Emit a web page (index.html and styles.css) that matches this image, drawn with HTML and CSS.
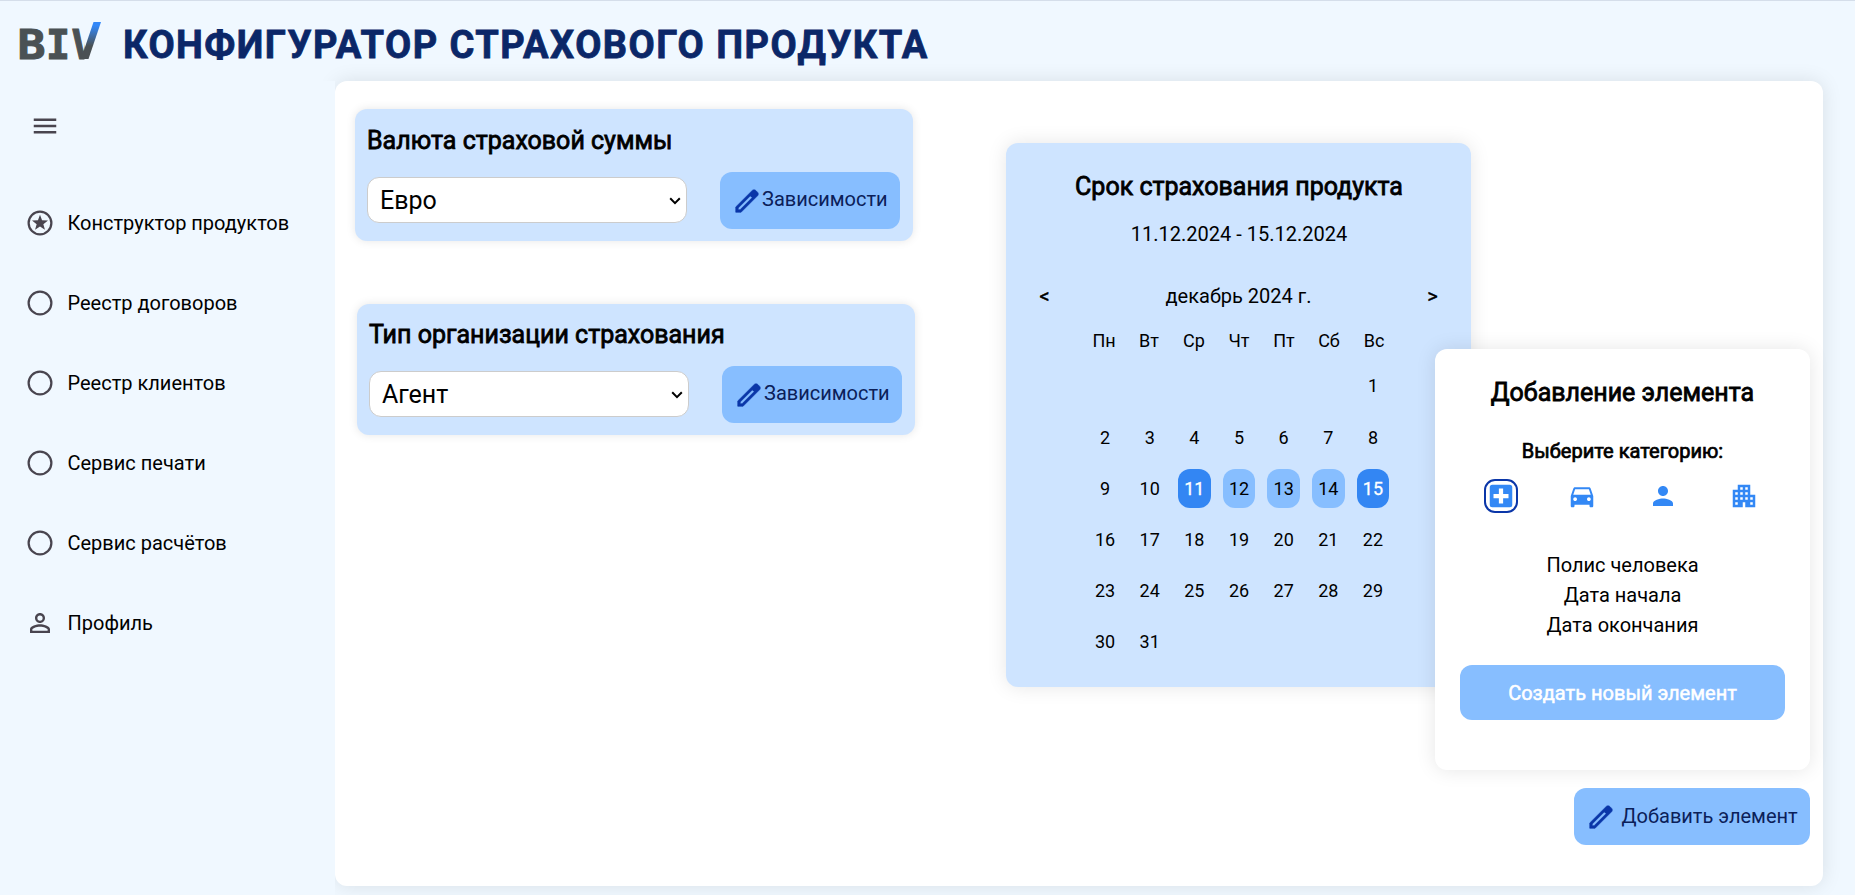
FILE: index.html
```html
<!DOCTYPE html>
<html lang="ru">
<head>
<meta charset="utf-8">
<title>Конфигуратор страхового продукта</title>
<link rel="stylesheet" href="styles.css">
</head>
<body>
<svg class="sprite" aria-hidden="true">
  <symbol id="i-edit" viewBox="0 -960 960 960"><path stroke="currentColor" stroke-width="20" d="M200-200h57l391-391-57-57-391 391v57Zm-80 80v-170l528-527q12-11 26.500-17t30.500-6q16 0 31 6t26 18l55 56q12 11 17.500 26t5.500 30q0 16-5.500 30.500T817-647L290-120H120Zm640-584-56-56 56 56Zm-141 85-28-29 57 57-29-28Z"/><path d="M700-830l130 130-110 110-130-130z"/></symbol>
  <symbol id="i-circle" viewBox="0 0 24 24"><path d="M12 2a10 10 0 1 0 0 20 10 10 0 0 0 0-20zm0 18.200a8.200 8.200 0 1 1 0-16.400 8.200 8.200 0 0 1 0 16.400z"/></symbol>
  <symbol id="i-chevron" viewBox="0 0 12 8"><path d="M1.200 1.300L6 6.100l4.800-4.800" fill="none" stroke="#000" stroke-width="2"/></symbol>
</svg>
<header class="header">
  <svg class="logo" viewBox="0 0 84 40" width="84" height="40">
    <defs>
      <linearGradient id="slash" x1="0" y1="0" x2="0" y2="1"><stop offset="0.1" stop-color="#3388f8"/><stop offset="0.65" stop-color="#4a5154"/></linearGradient>
      <clipPath id="left-arm"><rect x="48" y="0" width="16.500" height="40"/></clipPath>
    </defs>
    <text class="logo-text" x="-2.500" y="38.500" textLength="28" lengthAdjust="spacingAndGlyphs">B</text>
    <text class="logo-text" x="26" y="38.500">I</text>
    <text class="logo-text" x="51.500" y="38.500" clip-path="url(#left-arm)">V</text>
    <polygon points="73.500,2 81,2 68.500,39 61,39" fill="url(#slash)"/>
  </svg>
  <h1 class="title">КОНФИГУРАТОР СТРАХОВОГО ПРОДУКТА</h1>
</header>
<div class="body">
  <aside class="sidebar">
    <svg class="icon burger" viewBox="0 0 24 24"><path d="M3 18h18v-2H3v2zm0-5h18v-2H3v2zm0-7v2h18V6H3z"/></svg>
    <nav class="nav">
      <a class="nav-item"><svg class="icon" viewBox="0 0 24 24"><use href="#i-circle"/><path d="M12 5.300l1.650 4.450 4.750.2-3.720 2.950 1.280 4.570L12 14.860l-3.960 2.610 1.280-4.570L5.600 9.950l4.750-.2z"/></svg><span>Конструктор продуктов</span></a>
      <a class="nav-item"><svg class="icon"><use href="#i-circle"/></svg><span>Реестр договоров</span></a>
      <a class="nav-item"><svg class="icon"><use href="#i-circle"/></svg><span>Реестр клиентов</span></a>
      <a class="nav-item"><svg class="icon"><use href="#i-circle"/></svg><span>Сервис печати</span></a>
      <a class="nav-item"><svg class="icon"><use href="#i-circle"/></svg><span>Сервис расчётов</span></a>
      <a class="nav-item"><svg class="icon" viewBox="0 0 24 24"><path d="M12 5.900a2.100 2.100 0 1 1 0 4.200 2.100 2.100 0 0 1 0-4.200m0 9c2.970 0 6.100 1.460 6.100 2.100v1.100H5.900V17c0-.64 3.130-2.100 6.100-2.100M12 4C9.790 4 8 5.790 8 8s1.790 4 4 4 4-1.790 4-4-1.790-4-4-4zm0 9c-2.670 0-8 1.340-8 4v3h16v-3c0-2.660-5.330-4-8-4z"/></svg><span>Профиль</span></a>
    </nav>
  </aside>
  <main class="canvas">
    <section class="card card-currency">
      <h2 class="heading">Валюта страховой суммы</h2>
      <div class="card-row">
        <div class="select"><span>Евро</span><svg class="chevron"><use href="#i-chevron"/></svg></div>
        <button class="button button-deps"><svg class="icon"><use href="#i-edit"/></svg><span>Зависимости</span></button>
      </div>
    </section>
    <section class="card card-type">
      <h2 class="heading">Тип организации страхования</h2>
      <div class="card-row">
        <div class="select"><span>Агент</span><svg class="chevron"><use href="#i-chevron"/></svg></div>
        <button class="button button-deps"><svg class="icon"><use href="#i-edit"/></svg><span>Зависимости</span></button>
      </div>
    </section>
    <section class="calendar">
      <h2 class="heading">Срок страхования продукта</h2>
      <p class="range">11.12.2024 - 15.12.2024</p>
      <div class="month"><span class="arrow">&lt;</span><span>декабрь 2024 г.</span><span class="arrow">&gt;</span></div>
      <div class="weekdays"><span>Пн</span><span>Вт</span><span>Ср</span><span>Чт</span><span>Пт</span><span>Сб</span><span>Вс</span></div>
      <div class="days">
        <span class="day first">1</span>
        <span class="day">2</span><span class="day">3</span><span class="day">4</span><span class="day">5</span><span class="day">6</span><span class="day">7</span><span class="day">8</span>
        <span class="day">9</span><span class="day">10</span><span class="day edge">11</span><span class="day between">12</span><span class="day between">13</span><span class="day between">14</span><span class="day edge">15</span>
        <span class="day">16</span><span class="day">17</span><span class="day">18</span><span class="day">19</span><span class="day">20</span><span class="day">21</span><span class="day">22</span>
        <span class="day">23</span><span class="day">24</span><span class="day">25</span><span class="day">26</span><span class="day">27</span><span class="day">28</span><span class="day">29</span>
        <span class="day">30</span><span class="day">31</span>
      </div>
    </section>
    <section class="popup">
      <h2 class="heading">Добавление элемента</h2>
      <h3 class="subheading">Выберите категорию:</h3>
      <div class="categories">
        <span class="category active"><svg class="icon" viewBox="0 0 24 24"><path fill-rule="evenodd" d="M5 3h14a2 2 0 0 1 2 2v14a2 2 0 0 1-2 2H5a2 2 0 0 1-2-2V5a2 2 0 0 1 2-2zm5.300 15h3.400v-4.300H18v-3.400h-4.300V6h-3.400v4.300H6v3.400h4.300z"/></svg></span>
        <span class="category"><svg class="icon" viewBox="0 0 24 24"><path d="M18.920 6.010C18.720 5.420 18.160 5 17.500 5h-11c-.66 0-1.210.42-1.420 1.010L3 12v8c0 .55.45 1 1 1h1c.55 0 1-.45 1-1v-1h12v1c0 .55.45 1 1 1h1c.55 0 1-.45 1-1v-8l-2.080-5.990zM6.500 16c-.83 0-1.500-.67-1.500-1.500S5.670 13 6.500 13s1.500.67 1.500 1.500S7.330 16 6.500 16zm11 0c-.83 0-1.500-.67-1.500-1.500s.67-1.500 1.500-1.500 1.500.67 1.500 1.500-.67 1.500-1.500 1.500zM5 11l1.500-4.500h11L19 11H5z"/></svg></span>
        <span class="category"><svg class="icon" viewBox="0 0 24 24"><path d="M12 12c2.210 0 4-1.790 4-4s-1.790-4-4-4-4 1.790-4 4 1.790 4 4 4zm0 2c-2.670 0-8 1.340-8 4v2h16v-2c0-2.660-5.330-4-8-4z"/></svg></span>
        <span class="category"><svg class="icon" viewBox="0 0 24 24"><path d="M17 11V3H7v4H3v14h8v-4h2v4h8V11h-4zM7 19H5v-2h2v2zm0-4H5v-2h2v2zm0-4H5V9h2v2zm4 4H9v-2h2v2zm0-4H9V9h2v2zm0-4H9V5h2v2zm4 8h-2v-2h2v2zm0-4h-2V9h2v2zm0-4h-2V5h2v2zm4 12h-2v-2h2v2zm0-4h-2v-2h2v2z"/></svg></span>
      </div>
      <ul class="elements"><li>Полис человека</li><li>Дата начала</li><li>Дата окончания</li></ul>
      <button class="button button-create"><span>Создать новый элемент</span></button>
    </section>
    <button class="button button-add"><svg class="icon"><use href="#i-edit"/></svg><span>Добавить элемент</span></button>
  </main>
</div>
</body>
</html>
```
FILE: styles.css
```css
* { box-sizing: border-box; }
body {
  margin: 0;
  height: 895px;
  overflow: hidden;
  background: #f0f8ff;
  border-top: 1px solid #d5deea;
  color: #000;
  font: 20px/24px Roboto, sans-serif;
}
h1, h2, h3, p, ul { margin: 0; padding: 0; }
.sprite { display: none; }
.icon { display: block; flex: none; width: 30px; height: 30px; fill: currentColor; }

.header { display: flex; align-items: flex-start; height: 80px; padding: 19px 0 0 20px; }
.logo { display: block; flex: none; overflow: visible; }
.logo-text { font: 700 40px "DejaVu Sans Mono", monospace; fill: #4a5154; stroke: #4a5154; stroke-width: 1px; }
.title {
  margin: 2px 0 0 19px;
  color: #0b2768;
  font: 700 38px/46px Roboto, sans-serif;
  letter-spacing: 1.450px;
  white-space: nowrap;
  -webkit-text-stroke: 0.800px currentColor;
}

.body { display: flex; height: 814px; }
.sidebar {
  position: relative;
  z-index: 1;
  flex: none;
  width: 335px;
  padding: 30px 25px;
  background: #f0f8ff;
}
.burger { margin-left: 5px; color: #49454f; }
.nav { display: flex; flex-direction: column; gap: 50px; margin-top: 67px; }
.nav-item { display: flex; align-items: center; gap: 12.500px; height: 30px; }
.nav-item .icon { color: #49454f; }

.canvas {
  position: relative;
  flex: none;
  width: 1488px;
  height: 805px;
  border-radius: 12px;
  background: #fff;
  box-shadow: 0 0 20px rgba(0, 0, 0, 0.1);
}
.heading {
  font-size: 25px;
  line-height: 30px;
  font-weight: 400;
  white-space: nowrap;
  -webkit-text-stroke: 0.8px currentColor;
}

/* Cards placed freely on the constructor canvas */
.card {
  position: absolute;
  width: 558px;
  height: 132px;
  padding: 17px 12px 0;
  border-radius: 12px;
  background: #cee4ff;
  box-shadow: 0 0 10px rgba(0, 0, 0, 0.1);
}
.card-currency { left: 20px; top: 28px; }
.card-type { left: 22px; top: 223px; height: 131px; padding-top: 16px; }
.card-row { display: flex; align-items: center; gap: 33px; margin-top: 16px; }
.select {
  display: flex;
  align-items: center;
  justify-content: space-between;
  width: 320px;
  height: 46px;
  margin-bottom: 1px;
  padding: 1px 5px 0 12px;
  border: 1px solid #ccc;
  border-radius: 12px;
  background: #fff;
  font-size: 25px;
}
.chevron { width: 12px; height: 8px; }
.button {
  display: flex;
  align-items: center;
  border: 0;
  border-radius: 12px;
  background: #87beff;
  color: #0b2059;
  font: 20px/24px Roboto, sans-serif;
  white-space: nowrap;
}
.button .icon { color: #0a36a8; }
.button-deps { width: 180px; height: 57px; padding: 0 12px; }
.button-deps span { padding-bottom: 3px; }

.calendar {
  position: absolute;
  left: 671px;
  top: 62px;
  width: 465px;
  height: 544px;
  padding: 29px 31px 0 32px;
  border-radius: 12px;
  background: #cee4ff;
  box-shadow: 0 0 20px rgba(0, 0, 0, 0.1);
  text-align: center;
}
.range { margin-top: 20px; }
.month { display: flex; justify-content: space-between; margin: 38px 1px 0 0; }
.arrow { width: 13px; -webkit-text-stroke: 0.4px currentColor; }
.weekdays {
  display: grid;
  grid-template-columns: repeat(7, 45px);
  justify-content: center;
  margin-top: 22px;
  font-size: 18px;
  line-height: 22px;
}
.days {
  display: grid;
  grid-template-columns: repeat(7, 44.670px);
  grid-auto-rows: 51.200px;
  place-content: center;
  place-items: center;
  margin-top: 8.400px;
  font-size: 18px;
}
.day { width: 32.500px; height: 39px; border-radius: 12px; line-height: 39px; }
.first { grid-column: 7; }
.edge { background: #3386f3; color: #fff; -webkit-text-stroke: 0.3px currentColor; }
.between { background: #87beff; }

.popup {
  position: absolute;
  left: 1100px;
  top: 268px;
  width: 375px;
  height: 421px;
  padding: 29px 25px;
  border-radius: 12px;
  background: #fff;
  box-shadow: 0 0 20px rgba(0, 0, 0, 0.1);
  text-align: center;
}
.subheading { margin-top: 31px; font-size: 20px; line-height: 24px; font-weight: 400; -webkit-text-stroke: 0.7px currentColor; }
.categories { display: flex; justify-content: space-between; margin: 16px 24px 0; }
.category { display: grid; place-items: center; width: 34px; height: 34px; border: 2px solid transparent; border-radius: 11px; color: #3388f5; }
.category.active { border-color: #0a36a8; }
.elements { margin-top: 37px; list-style: none; line-height: 30px; }
.button-create { justify-content: center; width: 325px; height: 55px; margin-top: 25px; color: #fff; }
.button-create span { -webkit-text-stroke: 0.5px currentColor; }
.button-add { position: absolute; left: 1239px; top: 707px; width: 236px; height: 57px; padding: 0 12px; gap: 5.500px; }
.button-add span { padding-bottom: 2px; }
```
